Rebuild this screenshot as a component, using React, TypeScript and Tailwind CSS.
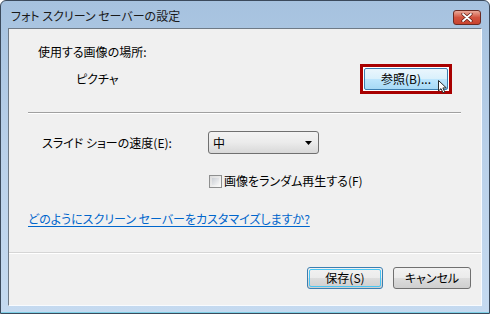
import React from "react";

export default function App() {
  const font = "font-['Noto_Sans_CJK_JP','Noto_Sans',sans-serif]";
  return (
    <div
      className={`w-[490px] h-[314px] relative flex flex-col rounded-t-[6px] border border-[#3b4a5c] bg-gradient-to-b from-[#a6c2df] via-[#bad1ea] to-[#c5daf0] text-[12px] leading-[16px] text-black ${font}`}
    >
      {/* Title bar */}
      <div className="h-[27px] flex items-start shrink-0">
        <div className="pl-[10px] pt-[7px] text-[12px] leading-[16px] text-[#1a1a1a] [font-feature-settings:'palt']">
          フォト スクリーン セーバーの設定
        </div>
        <div className="ml-auto mr-[8px] mt-[9px] w-[28px] h-[15px] rounded-[3px] border border-[#6b2a22] bg-gradient-to-b from-[#e9a99a] via-[#d2533f] to-[#c8432e] flex items-center justify-center">
          <svg width="12" height="9" viewBox="0 0 12 9">
            <path d="M2 1 L10 8 M10 1 L2 8" stroke="#5a1a12" strokeWidth="3.2" strokeLinecap="round" />
            <path d="M2 1 L10 8 M10 1 L2 8" stroke="#ffffff" strokeWidth="1.8" strokeLinecap="round" />
          </svg>
        </div>
      </div>

      {/* Client area */}
      <div className="mx-[7px] h-[278px] shrink-0 flex flex-col bg-[#f0f0f0] border-t border-l border-[#6f7a86] border-r border-r-[#f8fbff] border-b border-b-[#f8fbff] [font-feature-settings:'palt']">
        <div className="pl-[29px] mt-[15px]">使用する画像の場所:</div>

        <div className="mt-[4px] h-[30px] flex items-center pl-[67px] pr-[29px]">
          <span>ピクチャ</span>
          <div className="ml-auto relative w-[92px] h-[30px] border-[3px] border-[#a80000] bg-white p-[1px]">
            <div className="w-full h-full rounded-[2px] border border-[#3c7fb1] bg-[linear-gradient(to_bottom,#eaf6fd_0%,#d9f0fc_50%,#bee6fd_50%,#a7d9f5_100%)] flex items-center justify-center">
              参照(B)...
            </div>
            <svg
              className="absolute left-[75px] top-[13px]"
              width="11"
              height="14"
              viewBox="0 0 11 14"
            >
              <path d="M0.5 0.5 L0.5 11 L3 8.6 L5 12.8 L6.8 12 L4.9 7.9 L8.3 7.9 Z" fill="#ffffff" stroke="#2a2a2a" strokeWidth="1" strokeLinejoin="round" />
            </svg>
          </div>
        </div>

        <div className="mt-[18px] ml-[19px] mr-[20px] h-[2px] border-t border-[#a0a0a0] border-b border-b-white" />

        <div className="mt-[17px] h-[23px] flex items-center">
          <span className="pl-[33px] w-[199px] shrink-0">スライド ショーの速度(E):</span>
          <div className="w-[111px] h-[23px] rounded-[3px] border border-[#707070] bg-gradient-to-b from-[#f3f3f3] via-[#ebebeb] to-[#d8d8d8] flex items-center pl-[4px] pr-[6px]">
            <span>中</span>
            <svg className="ml-auto" width="7" height="4" viewBox="0 0 7 4">
              <path d="M0 0 L7 0 L3.5 4 Z" fill="#000" />
            </svg>
          </div>
        </div>

        <div className="mt-[19px] h-[16px] flex items-center pl-[200px]">
          <div className="w-[13px] h-[13px] border border-[#8e8f8f] bg-gradient-to-br from-[#dcdcdc] to-[#fbfbfb] p-[2px]">
            <div className="w-full h-full bg-gradient-to-br from-[#cbcfd5] to-[#f6f6f6]" />
          </div>
          <span className="ml-[2px]">画像をランダム再生する(F)</span>
        </div>

        <div className="mt-[22px] pl-[19px]">
          <span className="text-[#0066cc] underline underline-offset-[2px]">
            どのようにスクリーン セーバーをカスタマイズしますか?
          </span>
        </div>

        <div className="mt-[25px] h-[2px] border-t border-[#d5d5d5] border-b border-b-white" />

        <div className="mt-[13px] flex justify-end gap-[10px] pr-[10px]">
          <div className="w-[76px] h-[22px] rounded-[3px] border border-[#3c7fb1] bg-[linear-gradient(to_bottom,#f2f2f2_0%,#ebebeb_50%,#dddddd_50%,#cfcfcf_100%)] p-[1px]">
            <div className="w-full h-full rounded-[2px] border border-[#48c6f5] flex items-center justify-center">
              保存(S)
            </div>
          </div>
          <div className="w-[78px] h-[22px] rounded-[3px] border border-[#707070] bg-[linear-gradient(to_bottom,#f2f2f2_0%,#ebebeb_50%,#dddddd_50%,#cfcfcf_100%)] flex items-center justify-center">
            キャンセル
          </div>
        </div>
      </div>

      <div className="flex-1 border-b border-[#7fd0e6]" />
    </div>
  );
}
